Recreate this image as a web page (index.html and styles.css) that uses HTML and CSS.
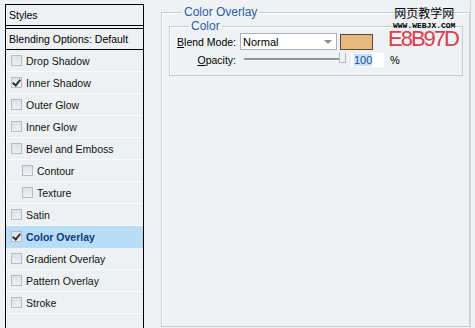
FILE: index.html
```html
<!DOCTYPE html>
<html lang="en">
<head>
    <meta charset="UTF-8">
    <title>Layer Style - Color Overlay</title>
    <link rel="stylesheet" href="styles.css">
</head>
<body>
    <div id="layer-style">
        <div class="styles-list">
            <div class="list-head">Styles</div>
            <div class="list-blend">Blending Options: Default</div>
            <div class="item"><span class="check"></span>Drop Shadow</div>
            <div class="item"><span class="check checked"></span>Inner Shadow</div>
            <div class="item"><span class="check"></span>Outer Glow</div>
            <div class="item"><span class="check"></span>Inner Glow</div>
            <div class="item"><span class="check"></span>Bevel and Emboss</div>
            <div class="item sub"><span class="check"></span>Contour</div>
            <div class="item sub"><span class="check"></span>Texture</div>
            <div class="item"><span class="check"></span>Satin</div>
            <div class="item active"><span class="check checked"></span>Color Overlay</div>
            <div class="item"><span class="check"></span>Gradient Overlay</div>
            <div class="item"><span class="check"></span>Pattern Overlay</div>
            <div class="item"><span class="check"></span>Stroke</div>
        </div>

        <div class="options">
            <fieldset class="group">
                <legend>Color Overlay</legend>
                <fieldset class="group inner">
                    <legend>Color</legend>
                    <div class="row">
                        <label class="label"><span><u>B</u>lend Mode:</span></label>
                        <div class="select">
                            <span>Normal</span>
                            <span class="arrow"></span>
                        </div>
                        <div class="swatch"></div>
                    </div>
                    <div class="row">
                        <label class="label"><span><u>O</u>pacity:</span></label>
                        <div class="slider"><span class="thumb"></span></div>
                        <div class="number"><span class="selected">100</span></div>
                        <span class="percent">%</span>
                    </div>
                </fieldset>
            </fieldset>
        </div>
    </div>

    <div class="hex-note">E8B97D</div>
    <div class="watermark">
        <div class="wm-cn">网页教学网</div>
        <div class="wm-url">WWW.WEBJX.COM</div>
    </div>
</body>
</html>
```

FILE: styles.css
```css
body {
    margin: 0;
    height: 328px;
    overflow: hidden;
    background-color: #eef2f5;
    font-family: "Liberation Sans", Arial, sans-serif;
    font-size: 11px;
    color: #000;
}
#layer-style {
    display: flex;
    height: 328px;
}
.styles-list {
    width: 137px;
    margin: 4px 0 0 5px;
    border: 1px solid #000;
    border-bottom: none;
    background-color: #eef1f4;
    font-size: 10.5px;
}
.list-head {
    height: 20px;
    line-height: 20px;
    padding-left: 3px;
    border-bottom: 1px solid #000;
}
.list-blend {
    height: 20px;
    line-height: 20px;
    padding-left: 3px;
    margin-top: 2px;
    border-top: 1px solid #000;
    border-bottom: 1px solid #000;
}
.item {
    display: flex;
    align-items: center;
    height: 21px;
    border-bottom: 1px solid #f9fbfc;
    padding-left: 5px;
    color: #111;
}
.item.sub {
    padding-left: 16px;
}
.item.active {
    background-color: #b9dcf7;
    color: #0b3a7a;
    font-weight: bold;
    border-bottom-color: #b9dcf7;
}
.check {
    width: 9px;
    height: 9px;
    margin-right: 4px;
    border: 1px solid #b4bcc4;
    background: linear-gradient(#dde2e7, #eef1f4);
    position: relative;
}
.check.checked::after {
    content: "";
    position: absolute;
    left: 2px;
    top: 0;
    width: 3px;
    height: 6px;
    border-right: 2px solid #333;
    border-bottom: 2px solid #333;
    transform: rotate(40deg);
}
.options {
    width: 309px;
    margin-left: 17px;
    padding-top: 5px;
    border-right: 1px solid #d0d6dc;
}
.group {
    margin: 0;
    padding: 0 6px 250px 7px;
    border: 1px solid #c6cdd4;
    box-shadow: inset 1px 1px 0 #fff;
}
.group legend {
    margin-left: 13px;
    padding: 0 2px;
    line-height: 14px;
    font-size: 12px;
    color: #2d5ca6;
}
.group.inner {
    padding: 0 5px 6px 5px;
}
.group.inner legend {
    margin-left: 14px;
}
.row {
    display: flex;
    align-items: center;
    height: 17px;
    margin-bottom: 1px;
}
.label {
    display: flex;
    justify-content: flex-end;
    width: 61px;
    margin-right: 4px;
    white-space: nowrap;
    font-size: 10.5px;
}
.select {
    display: flex;
    align-items: center;
    justify-content: space-between;
    width: 93px;
    height: 15px;
    padding-left: 2px;
    border: 1px solid #a9b2bb;
    background-color: #fff;
}
.arrow {
    width: 0;
    height: 0;
    margin-right: 4px;
    border-left: 4px solid transparent;
    border-right: 4px solid transparent;
    border-top: 4px solid #8a9096;
}
.swatch {
    width: 31px;
    height: 14px;
    margin-left: 3px;
    border: 1px solid #5a4a38;
    background-color: #e8b97d;
}
.slider {
    width: 102px;
    height: 2px;
    margin-left: 4px;
    background-color: #8d949a;
    border-bottom: 1px solid #fff;
    position: relative;
}
.thumb {
    position: absolute;
    right: 0;
    top: -5px;
    width: 5px;
    height: 9px;
    border: 1px solid #b0b8c0;
    border-top: none;
    background-color: #eef2f5;
}
.number {
    width: 30px;
    height: 14px;
    margin-left: 5px;
    padding-left: 3px;
    line-height: 14px;
    background-color: #fff;
}
.selected {
    background-color: #c6e2fa;
    color: #1c4f9a;
}
.percent {
    margin-left: 6px;
}
.hex-note {
    position: absolute;
    left: 388px;
    top: 26px;
    font-size: 22px;
    letter-spacing: -2px;
    color: #d8404e;
}
.watermark {
    position: absolute;
    left: 393px;
    top: 5px;
    text-align: center;
}
.wm-cn {
    font-family: "Noto Sans CJK SC", sans-serif;
    font-size: 12px;
    line-height: 16px;
}
.wm-url {
    font-family: "Liberation Mono", monospace;
    font-size: 8px;
    font-weight: bold;
    line-height: 10px;
}
```
